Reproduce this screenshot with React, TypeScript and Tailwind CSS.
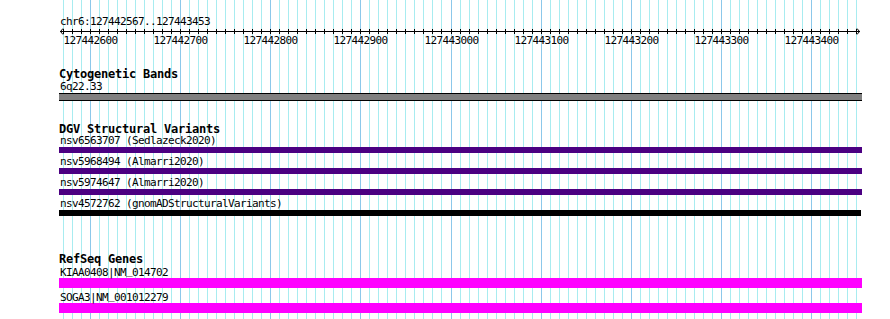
const FIRST_TICK = 127442570;
const LAST_TICK = 127443450;

// bp -> pixel on the 890px canvas
const toX = (bp: number) => Math.round(90 + (bp - 127442600) * 0.90125) + 0.5;

const ticks: number[] = [];
for (let bp = FIRST_TICK; bp <= LAST_TICK; bp += 10) ticks.push(bp);
const majors = ticks.filter((bp) => bp % 100 === 0);

const mono = "font-['DejaVu_Sans_Mono',monospace]";

function GridLines() {
  return (
    <svg className="absolute inset-0" width={890} height={319}>
      {ticks.map((bp) => (
        <line
          key={bp}
          x1={toX(bp)}
          x2={toX(bp)}
          y1={0}
          y2={319}
          stroke={bp % 100 === 0 ? '#8cc8ea' : '#a8ecf0'}
          strokeWidth={1}
        />
      ))}
    </svg>
  );
}

function Ruler() {
  return (
    <svg width={890} height={20} className="block">
      <line x1={60} x2={860} y1={4.5} y2={4.5} stroke="#000" />
      <polyline points="63,1.5 60.5,4.5 63,7.5" fill="none" stroke="#000" />
      <polyline points="857,1.5 859.5,4.5 857,7.5" fill="none" stroke="#000" />
      {ticks.map((bp) => (
        <line key={bp} x1={toX(bp)} x2={toX(bp)} y1={2} y2={7} stroke="#000" />
      ))}
      {majors.map((bp) => (
        <text
          key={bp}
          x={toX(bp)}
          y={17}
          textAnchor="middle"
          className={`${mono} text-[11px] tracking-[-0.62px]`}
          fill="#000"
        >
          {bp}
        </text>
      ))}
    </svg>
  );
}

function TrackTitle({ children }: { children: string }) {
  return (
    <div className={`h-[12px] pl-[59px] text-[12px] leading-[12px] font-bold tracking-[-0.22px] ${mono}`}>
      {children}
    </div>
  );
}

function Label({ children }: { children: string }) {
  // the bitmap font's underscore sits higher than DejaVu's
  const parts = children.split('_');
  return (
    <div className={`relative z-10 h-[11px] pl-[60px] text-[11px] leading-[11px] tracking-[-0.62px] whitespace-pre ${mono}`}>
      {parts.map((p, i) => (
        <span key={i}>
          {i > 0 && <span className="relative -top-[2px]">_</span>}
          {p}
        </span>
      ))}
    </div>
  );
}

const dgv = [
  { name: 'nsv6563707 (Sedlazeck2020)', color: 'bg-[#4b0082]' },
  { name: 'nsv5968494 (Almarri2020)', color: 'bg-[#4b0082]' },
  { name: 'nsv5974647 (Almarri2020)', color: 'bg-[#4b0082]' },
  { name: 'nsv4572762 (gnomADStructuralVariants)', color: 'bg-black' },
];

const genes = ['KIAA0408|NM_014702', 'SOGA3|NM_001012279'];

export default function App() {
  return (
    <div className="relative h-[319px] w-[890px] overflow-hidden bg-white text-black">
      <GridLines />

      <div className="relative pt-[16px]">
        {/* Ruler */}
        <Label>chr6:127442567..127443453</Label>
        <Ruler />

        {/* Cytogenetic Bands */}
        <div className="mt-[21px]">
          <TrackTitle>Cytogenetic Bands</TrackTitle>
          <div className="mt-[1px]">
            <Label>6q22.33</Label>
          </div>
          <div className="mt-[1px] ml-[59px] h-[8px] w-[803px] border-y border-black bg-[#808080]" />
        </div>

        {/* DGV Structural Variants */}
        <div className="mt-[22px]">
          <TrackTitle>DGV Structural Variants</TrackTitle>
          {dgv.map((row, i) => (
            <div key={row.name} className={i === 0 ? '' : 'mt-[3px]'}>
              <Label>{row.name}</Label>
              <div className={`mt-[1px] ml-[59px] h-[6px] ${i === 3 ? 'w-[802px]' : 'w-[803px]'} ${row.color}`} />
            </div>
          ))}
        </div>

        {/* RefSeq Genes */}
        <div className="mt-[37px]">
          <TrackTitle>RefSeq Genes</TrackTitle>
          {genes.map((g, i) => (
            <div key={g} className={i === 0 ? 'mt-[2px]' : 'mt-[4px]'}>
              <Label>{g}</Label>
              <div className="ml-[59px] h-[10px] w-[803px] bg-[#ff00ff]" />
            </div>
          ))}
        </div>
      </div>
    </div>
  );
}
